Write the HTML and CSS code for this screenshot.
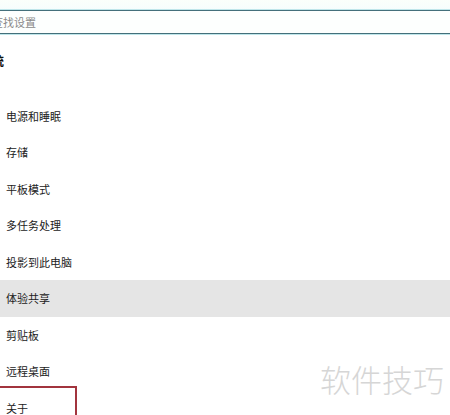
FILE: index.html
```html
<!DOCTYPE html>
<html lang="zh-CN">
<head>
<meta charset="utf-8">
<link rel="stylesheet" href="styles.css">
</head>
<body>
<div class="page">
  <div class="top">
    <div class="search"><span class="placeholder">查找设置</span></div>
  </div>
  <div class="heading">系统</div>
  <ul class="menu">
    <li class="item">电源和睡眠</li>
    <li class="item">存储</li>
    <li class="item">平板模式</li>
    <li class="item">多任务处理</li>
    <li class="item">投影到此电脑</li>
    <li class="item active">体验共享</li>
    <li class="item">剪贴板</li>
    <li class="item">远程桌面</li>
    <li class="item marked">关于<span class="mark"></span></li>
  </ul>
  <div class="watermark">软件技巧</div>
</div>
</body>
</html>
```
FILE: styles.css
```css
html, body {
  margin: 0;
  padding: 0;
  background: #ffffff;
}
body {
  width: 450px;
  height: 415px;
  overflow: hidden;
  font-family: "Noto Sans CJK SC", "Microsoft YaHei", sans-serif;
  color: #1f1f1f;
}
.page {
  position: relative;
  width: 450px;
  height: 415px;
  overflow: hidden;
}
.top {
  padding-top: 10px;
  background: linear-gradient(#fbfffb 0, #f6fdfd 10px, #ffffff 34px);
}
.search {
  margin-left: -20px;
  width: 500px;
  height: 22px;
  border-top: 1px solid #44707b;
  border-bottom: 1px solid #44707b;
  box-shadow: 0 -1px 0 #bfe6ea, 0 1px 0 #bfe6ea;
  background: #fdfffe;
  display: flex;
  align-items: center;
}
.placeholder {
  margin-left: 12px;
  font-size: 11px;
  color: #8a8a8a;
  line-height: 22px;
}
.heading {
  margin-top: 19px;
  margin-left: -20px;
  font-size: 12px;
  font-weight: bold;
  line-height: 16px;
  height: 16px;
  color: #111;
}
.menu {
  list-style: none;
  margin: 0;
  margin-top: 28.5px;
  padding: 0;
}
.item {
  position: relative;
  height: 36.5px;
  line-height: 36.5px;
  padding-left: 6px;
  font-size: 11px;
  color: #222;
}
.item.active {
  background: #e5e5e5;
}
.mark {
  position: absolute;
  top: -3.5px;
  left: -12px;
  width: 89px;
  height: 60px;
  border: 2px solid #a2343d;
  box-sizing: border-box;
}
.watermark {
  position: absolute;
  left: 320px;
  top: 358px;
  font-size: 31px;
  line-height: 42px;
  color: #d6d6d6;
  font-weight: 300;
  white-space: nowrap;
}
```
